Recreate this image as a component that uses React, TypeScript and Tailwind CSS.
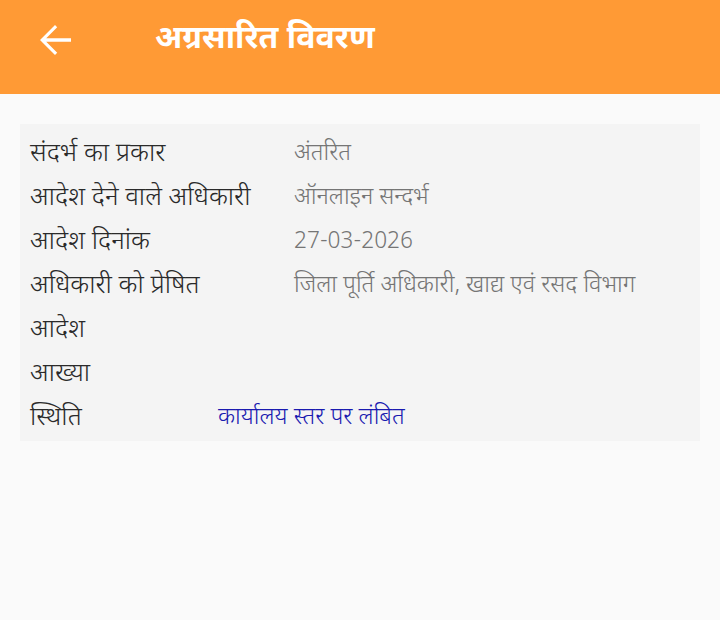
type Row = { label: string; value: string }

const rows: Row[] = [
  { label: 'संदर्भ का प्रकार', value: 'अंतरित' },
  { label: 'आदेश देने वाले अधिकारी', value: 'ऑनलाइन सन्दर्भ' },
  { label: 'आदेश दिनांक', value: '27-03-2026' },
  { label: 'अधिकारी को प्रेषित', value: 'जिला पूर्ति अधिकारी, खाद्य एवं रसद विभाग' },
  { label: 'आदेश', value: '' },
  { label: 'आख्या', value: '' },
]

function BackArrow() {
  return (
    <svg viewBox="0 0 24 24" className="h-[48px] w-[48px] fill-white" aria-hidden>
      <path d="M20 11.1H7.6l5.5-5.5L12 4.5 4.5 12l7.5 7.5 1.1-1.1-5.5-5.5H20z" />
    </svg>
  )
}

export default function App() {
  return (
    <div
      className="min-h-[620px] w-[720px] bg-[#fafafa]"
      style={{ fontFamily: '"Noto Sans Devanagari", "Noto Sans", Roboto, sans-serif' }}
    >
      <header className="flex h-[94px] items-center bg-[#ff9a35] pb-[14px]">
        <div className="ml-[31px]">
          <BackArrow />
        </div>
        <h1 className="ml-[76px] text-[32px] font-bold text-white">अग्रसारित विवरण</h1>
      </header>

      <div className="px-5 pt-[30px]">
        <div className="bg-[#f4f4f4] px-[10px] pt-[9px] pb-0">
          {rows.map((r) => (
            <div key={r.label} className="flex h-[44px] items-center">
              <span className="w-[264px] shrink-0 text-[26px] font-light text-[#2a2a2a]">{r.label}</span>
              <span className="text-[23.5px] font-light text-[#757575]">{r.value}</span>
            </div>
          ))}
          <div className="flex h-[44px] items-center">
            <span className="w-[188px] shrink-0 text-[26px] font-light text-[#2a2a2a]">स्थिति</span>
            <span className="text-[23.5px] font-light text-[#1a1ab0]">कार्यालय स्तर पर लंबित</span>
          </div>
        </div>
      </div>
    </div>
  )
}
